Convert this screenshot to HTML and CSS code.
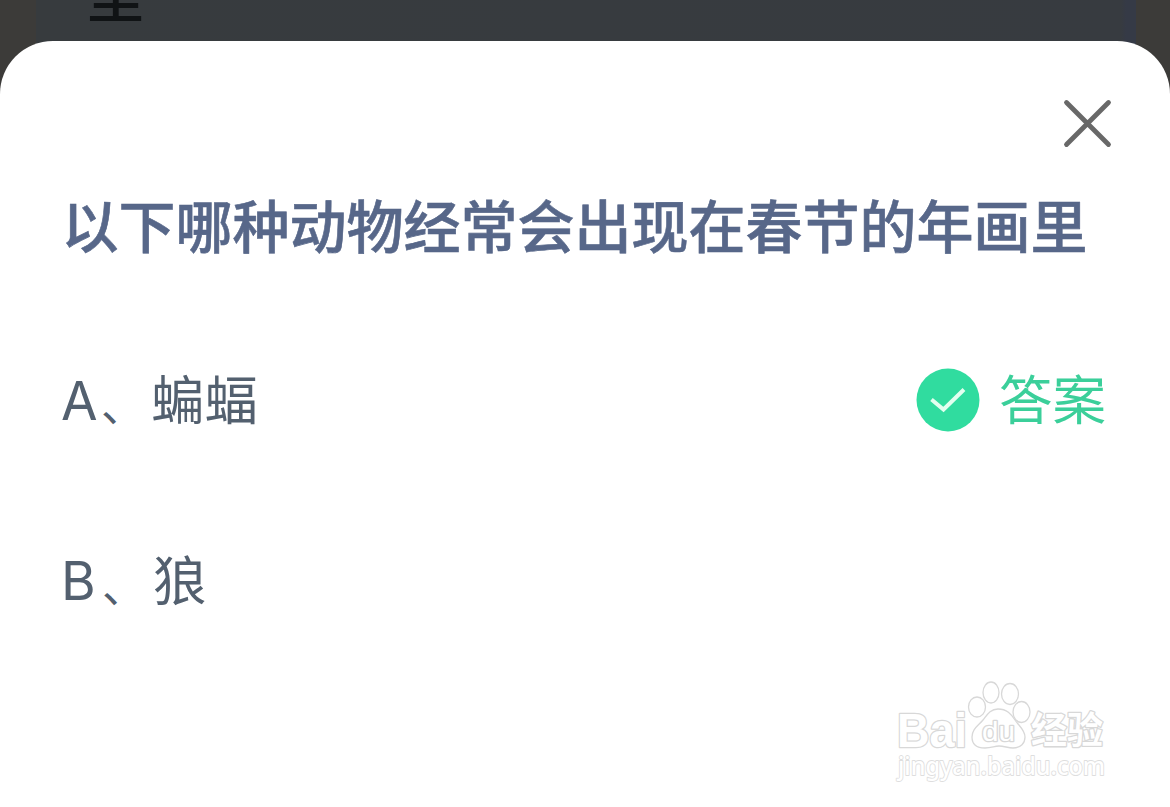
FILE: index.html
```html
<!DOCTYPE html>
<html lang="zh-CN">
<head>
<meta charset="utf-8">
<title>答题</title>
<link rel="stylesheet" href="styles.css">
</head>
<body>
<div class="backdrop"><div class="page-behind"><span class="behind-text">里</span></div></div>
<main class="sheet">
  <header class="sheet-header">
    <svg class="close" viewBox="0 0 50 50" aria-label="关闭"><path d="M3.500 3.500 45.500 45.500M45.500 3.500 3.500 45.500"/></svg>
  </header>
  <h1 class="question">以下哪种动物经常会出现在春节的年画里</h1>
  <ul class="options">
    <li class="option">
      <span class="letter">A</span><span class="comma">、</span><span class="label">蝙蝠</span>
      <span class="answer">
        <svg class="check" viewBox="0 0 64 64"><circle cx="32" cy="32" r="31.500"/><path d="M15.500 31.500 27.500 41.500 48 21.500"/></svg>
        <span class="answer-text">答案</span>
      </span>
    </li>
    <li class="option option-b"><span class="letter">B</span><span class="comma">、</span><span class="label">狼</span></li>
  </ul>
  <footer class="footer">
    <svg class="watermark" viewBox="0 0 240 120">
      <g class="mark">
        <text class="wm-logo" x="17" y="76.500" textLength="70" lengthAdjust="spacingAndGlyphs">Bai</text>
        <ellipse cx="97" cy="37" rx="8.500" ry="10"/>
        <ellipse cx="111" cy="22.500" rx="8" ry="10.500"/>
        <ellipse cx="130" cy="24" rx="8.500" ry="10.500"/>
        <ellipse cx="141.500" cy="42" rx="8.500" ry="10.500"/>
        <path d="M118 39C110 39 107 45 103 50C98 56 92 59 92 67C92 75 98 78 105 78C112 78 114 76 119 76C124 76 128 78 133 78C141 78 145 73 145 67C145 60 139 56 135 50C131 44 127 39 118 39Z"/>
        <text class="wm-du" x="102" y="71" textLength="33" lengthAdjust="spacingAndGlyphs">du</text>
        <text class="wm-cn" x="151" y="74" textLength="72" lengthAdjust="spacingAndGlyphs">经验</text>
        <text class="wm-url" x="18" y="105" textLength="207" lengthAdjust="spacingAndGlyphs">jingyan.baidu.com</text>
      </g>
    </svg>
  </footer>
</main>
</body>
</html>
```
FILE: styles.css
```css
* { box-sizing: border-box; }
body {
  margin: 0;
  width: 1170px;
  height: 807px;
  overflow: hidden;
  position: relative;
  background: #3c3b39;
  font-family: "Noto Sans CJK SC", sans-serif;
}
.backdrop {
  position: absolute;
  inset: 0 0 auto;
  height: 120px;
  padding: 0 34px 0 36px;
}
.page-behind {
  height: 100%;
  overflow: hidden;
  padding-left: 51px;
  background: linear-gradient(90deg, #373b3e, #373b40 1085px, #353a46 1090px);
}
.behind-text {
  display: block;
  margin-top: -50px;
  font-size: 57px;
  line-height: 84px;
  font-weight: 500;
  color: #101315;
}
.sheet {
  position: relative;
  display: flex;
  flex-direction: column;
  height: 766px;
  margin-top: 41px;
  border-radius: 53px 53px 0 0;
  background: #fff;
}
.sheet-header {
  display: flex;
  justify-content: flex-end;
  padding: 58px 57px 0 0;
}
.close { width: 50px; height: 50px; }
.close path { fill: none; stroke: #686868; stroke-width: 4.8; stroke-linecap: round; }
.question {
  margin: 32px 0 0 61.5px;
  font-size: 57px;
  line-height: 84px;
  font-weight: 500;
  white-space: nowrap;
  color: #576789;
  -webkit-text-stroke: 0.6px #576789;
}
.options {
  list-style: none;
  margin: 92px 0 0;
  padding: 0 64px 0 61px;
  display: grid;
  row-gap: 101px;
}
.option {
  display: flex;
  align-items: center;
  height: 80px;
  font-size: 53.5px;
  line-height: 80px;
  color: #53606f;
}
.letter { width: 40px; padding-top: 7px; font-family: Inter, sans-serif; font-size: 53px; }
.comma { width: 50px; padding-top: 11px; font-size: 44px; }
.option-b .letter { width: 41px; padding-top: 5px; }
.option-b .comma { width: 51px; }
.answer {
  display: flex;
  align-items: center;
  gap: 19px;
  margin-left: auto;
  color: #3bcf9a;
}
.check { width: 64px; height: 64px; margin-top: 6px; }
.check circle { fill: #30dc9f; }
.check path { fill: none; stroke: #e2fff0; stroke-width: 4; }
.footer {
  display: flex;
  justify-content: flex-end;
  margin-top: auto;
  padding: 0 50px 17px 0;
}
.watermark { width: 240px; height: 120px; }
.mark { fill: #fff; stroke: #d8d8d8; stroke-width: 1.3; }
.mark text { paint-order: stroke; stroke-width: 2.6; stroke-linejoin: round; }
.wm-logo { font: 700 49px "Liberation Sans", sans-serif; }
.mark .wm-du { font: 400 28px "Liberation Sans", sans-serif; }
.wm-cn { font: 700 37px "Noto Sans CJK SC", sans-serif; }
.mark .wm-url { font: 500 25px "Noto Sans", sans-serif; stroke: #dedede; stroke-width: 1.8; }
```
